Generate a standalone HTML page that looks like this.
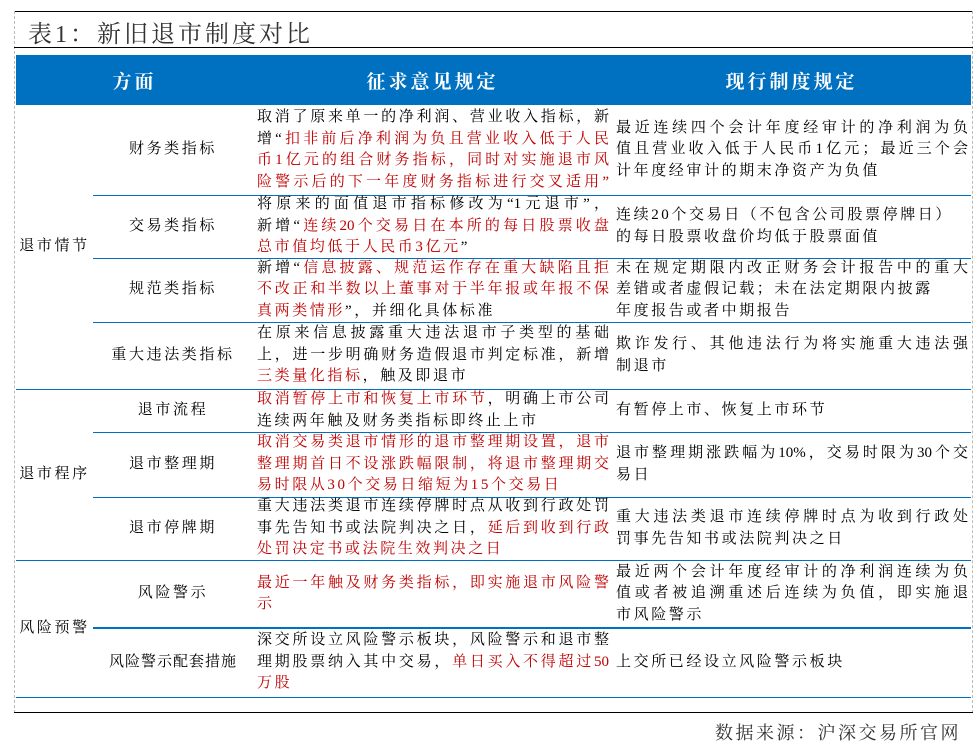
<!DOCTYPE html>
<html><head><meta charset="utf-8"><style>
*{margin:0;padding:0;box-sizing:border-box}
body{width:980px;height:742px;background:#fff;position:relative;overflow:hidden;font-family:"Liberation Serif","Noto Serif CJK SC",serif;color:#000}
.a{position:absolute}
.hl{position:absolute;height:1px;background:#0070c0}
.c{position:absolute;display:flex;flex-direction:column;justify-content:center;font-size:15px;line-height:21.5px;letter-spacing:2.6px}
.c div{white-space:nowrap}
.j{text-align:justify;text-align-last:justify;letter-spacing:0}
.m{align-items:center;text-align:center}
.r{color:#c00000}
.h{position:absolute;top:55px;height:50px;color:#fff;font-weight:bold;font-size:19px;letter-spacing:3px;display:flex;align-items:center;justify-content:center}
</style></head><body>
<div class="a" style="left:14px;top:11px;width:959px;height:1px;background:#000"></div>
<div class="a" style="left:14px;top:11px;width:0;height:702px;border-left:1px dashed #bbb"></div>
<div class="a" style="left:972px;top:11px;width:0;height:702px;border-left:1px dashed #bbb"></div>
<div class="a" style="left:28px;top:14px;font-size:24px;color:#333;letter-spacing:3px">表1：新旧退市制度对比</div>
<div class="a" style="left:14px;top:47px;width:959px;height:1px;background:#000"></div>
<div class="a" style="left:16px;top:55px;width:955px;height:50px;background:#0070c0"></div>
<div class="h" style="left:16px;width:237px">方面</div>
<div class="h" style="left:253px;width:359px">征求意见规定</div>
<div class="h" style="left:612px;width:359px">现行制度规定</div>

<div class="hl" style="left:93px;top:195px;width:878px"></div>
<div class="hl" style="left:93px;top:258px;width:878px"></div>
<div class="hl" style="left:93px;top:322px;width:878px"></div>
<div class="hl" style="left:16px;top:389px;width:955px"></div>
<div class="hl" style="left:93px;top:432px;width:878px"></div>
<div class="hl" style="left:93px;top:497px;width:878px"></div>
<div class="hl" style="left:16px;top:560px;width:955px"></div>
<div class="hl" style="left:93px;top:627px;width:878px;height:2px"></div>
<div class="hl" style="left:16px;top:697px;width:955px"></div>
<div class="a" style="left:14px;top:712px;width:959px;height:1px;background:#000"></div>

<div class="c m" style="left:16px;width:77px;top:105px;height:284px">退市情节</div>
<div class="c m" style="left:16px;width:77px;top:389px;height:171px">退市程序</div>
<div class="c m" style="left:16px;width:77px;top:560px;height:137px">风险预警</div>

<div class="c m" style="left:93px;width:160px;top:105px;height:90px">财务类指标</div>
<div class="c m" style="left:93px;width:160px;top:195px;height:63px">交易类指标</div>
<div class="c m" style="left:93px;width:160px;top:258px;height:64px">规范类指标</div>
<div class="c m" style="left:93px;width:160px;top:322px;height:67px">重大违法类指标</div>
<div class="c m" style="left:93px;width:160px;top:389px;height:43px">退市流程</div>
<div class="c m" style="left:93px;width:160px;top:432px;height:65px">退市整理期</div>
<div class="c m" style="left:93px;width:160px;top:497px;height:63px">退市停牌期</div>
<div class="c m" style="left:93px;width:160px;top:560px;height:68px">风险警示</div>
<div class="c m" style="left:93px;width:160px;top:628px;height:69px;letter-spacing:1px">风险警示配套措施</div>

<div class="c" style="left:257px;width:352px;top:105px;height:90px">
<div class="j">取消了原来单一的净利润、营业收入指标，新</div>
<div class="j">增“<span class="r">扣非前后净利润为负且营业收入低于人民</span></div>
<div class="j r">币1亿元的组合财务指标，同时对实施退市风</div>
<div class="j r">险警示后的下一年度财务指标进行交叉适用”</div></div>
<div class="c" style="left:616px;width:352px;top:105px;height:90px">
<div class="j">最近连续四个会计年度经审计的净利润为负</div>
<div class="j">值且营业收入低于人民币1亿元；最近三个会</div>
<div>计年度经审计的期末净资产为负值</div></div>

<div class="c" style="left:257px;width:352px;top:195px;height:63px">
<div class="j">将原来的面值退市指标修改为“1元退市”，</div>
<div class="j">新增“<span class="r">连续20个交易日在本所的每日股票收盘</span></div>
<div><span class="r">总市值均低于人民币3亿元</span>”</div></div>
<div class="c" style="left:616px;width:352px;top:195px;height:63px">
<div>连续20个交易日（不包含公司股票停牌日）</div>
<div>的每日股票收盘价均低于股票面值</div></div>

<div class="c" style="left:257px;width:352px;top:258px;height:64px">
<div class="j">新增“<span class="r">信息披露、规范运作存在重大缺陷且拒</span></div>
<div class="j r">不改正和半数以上董事对于半年报或年报不保</div>
<div><span class="r">真两类情形</span>”，并细化具体标准</div></div>
<div class="c" style="left:616px;width:352px;top:258px;height:64px">
<div class="j">未在规定期限内改正财务会计报告中的重大</div>
<div>差错或者虚假记载；未在法定期限内披露</div>
<div>年度报告或者中期报告</div></div>

<div class="c" style="left:257px;width:352px;top:322px;height:67px">
<div class="j">在原来信息披露重大违法退市子类型的基础</div>
<div class="j">上，进一步明确财务造假退市判定标准，新增</div>
<div><span class="r">三类量化指标</span>，触及即退市</div></div>
<div class="c" style="left:616px;width:352px;top:322px;height:67px">
<div class="j">欺诈发行、其他违法行为将实施重大违法强</div>
<div>制退市</div></div>

<div class="c" style="left:257px;width:352px;top:389px;height:43px">
<div class="j"><span class="r">取消暂停上市和恢复上市环节</span>，明确上市公司</div>
<div>连续两年触及财务类指标即终止上市</div></div>
<div class="c" style="left:616px;width:352px;top:389px;height:43px">
<div>有暂停上市、恢复上市环节</div></div>

<div class="c" style="left:257px;width:352px;top:432px;height:65px">
<div class="j r">取消交易类退市情形的退市整理期设置，退市</div>
<div class="j r">整理期首日不设涨跌幅限制，将退市整理期交</div>
<div class="r">易时限从30个交易日缩短为15个交易日</div></div>
<div class="c" style="left:616px;width:352px;top:432px;height:65px">
<div class="j">退市整理期涨跌幅为10%，交易时限为30个交</div>
<div>易日</div></div>

<div class="c" style="left:257px;width:352px;top:497px;height:63px">
<div class="j">重大违法类退市连续停牌时点从收到行政处罚</div>
<div class="j">事先告知书或法院判决之日，<span class="r">延后到收到行政</span></div>
<div class="r">处罚决定书或法院生效判决之日</div></div>
<div class="c" style="left:616px;width:352px;top:497px;height:63px">
<div class="j">重大违法类退市连续停牌时点为收到行政处</div>
<div>罚事先告知书或法院判决之日</div></div>

<div class="c" style="left:257px;width:352px;top:560px;height:68px">
<div class="j r">最近一年触及财务类指标，即实施退市风险警</div>
<div class="r">示</div></div>
<div class="c" style="left:616px;width:352px;top:560px;height:68px">
<div class="j">最近两个会计年度经审计的净利润连续为负</div>
<div class="j">值或者被追溯重述后连续为负值，即实施退</div>
<div>市风险警示</div></div>

<div class="c" style="left:257px;width:352px;top:628px;height:69px">
<div class="j">深交所设立风险警示板块，风险警示和退市整</div>
<div class="j">理期股票纳入其中交易，<span class="r">单日买入不得超过50</span></div>
<div class="r">万股</div></div>
<div class="c" style="left:616px;width:352px;top:628px;height:69px">
<div>上交所已经设立风险警示板块</div></div>

<div class="a" style="left:715px;top:719px;font-size:18px;color:#333;letter-spacing:2.5px">数据来源：沪深交易所官网</div>
</body></html>
